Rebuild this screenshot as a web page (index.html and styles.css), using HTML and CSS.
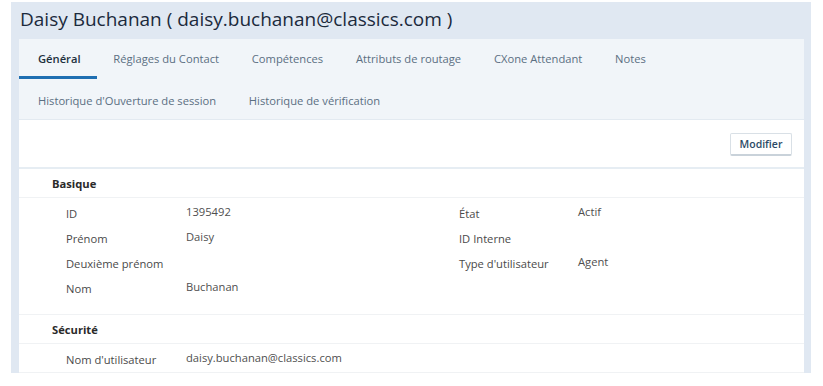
FILE: index.html
```html
<!DOCTYPE html>
<html lang="fr">
<head>
<meta charset="utf-8">
<link rel="stylesheet" href="styles.css">
</head>
<body>
<div class="frame">
  <h1 class="title">Daisy Buchanan ( daisy.buchanan@classics.com )</h1>
  <div class="panel">
    <nav class="tabs">
      <div class="tab-row">
        <span class="tab active">Général</span>
        <span class="tab">Réglages du Contact</span>
        <span class="tab">Compétences</span>
        <span class="tab">Attributs de routage</span>
        <span class="tab">CXone Attendant</span>
        <span class="tab">Notes</span>
      </div>
      <div class="tab-row">
        <span class="tab">Historique d'Ouverture de session</span>
        <span class="tab">Historique de vérification</span>
      </div>
    </nav>
    <div class="toolbar">
      <button class="btn">Modifier</button>
    </div>
    <section class="section">
      <div class="section-head">Basique</div>
      <div class="grid">
        <div class="label">ID</div><div class="value">1395492</div>
        <div class="label">État</div><div class="value">Actif</div>
        <div class="label">Prénom</div><div class="value">Daisy</div>
        <div class="label">ID Interne</div><div class="value"></div>
        <div class="label">Deuxième prénom</div><div class="value"></div>
        <div class="label">Type d'utilisateur</div><div class="value">Agent</div>
        <div class="label">Nom</div><div class="value">Buchanan</div>
        <div class="label"></div><div class="value"></div>
      </div>
    </section>
    <section class="section">
      <div class="section-head">Sécurité</div>
      <div class="grid">
        <div class="label">Nom d'utilisateur</div><div class="value">daisy.buchanan@classics.com</div>
        <div class="label"></div><div class="value"></div>
      </div>
    </section>
  </div>
</div>
</body>
</html>
```
FILE: styles.css
```css
* { box-sizing: border-box; }
html, body { margin: 0; padding: 0; background: #ffffff; }
body {
  font-family: "Open Sans", "Noto Sans", "Liberation Sans", sans-serif;
  color: #333;
  overflow: hidden;
}
.frame {
  margin: 2px 0 0 11px;
  width: 800px;
  height: 371px;
  background: #e0e8f2;
  padding: 0 7px 0 8px;
  overflow: hidden;
}
.title {
  margin: 0;
  padding: 4px 0 6px 1px;
  font-size: 19px;
  line-height: 27px;
  font-weight: 400;
  color: #1b2a3c;
}
.panel {
  background: #ffffff;
  height: 334px;
}
.tabs {
  background: #f1f5f9;
  border-bottom: 1px solid #e3eaf1;
}
.tab-row {
  display: flex;
  height: 40px;
}
.tab {
  display: flex;
  align-items: center;
  padding: 2px 16.4px 0;
  font-size: 11.2px;
  color: #5b6f82;
  white-space: nowrap;
  border-bottom: 3px solid transparent;
}
.tab:first-child { padding-left: 19px; }
.tab.active {
  color: #22303e;
  font-weight: 600;
  border-bottom-color: #1f6fb2;
}
.tab-row + .tab-row .tab { padding-top: 3px; border-bottom-width: 0; }
.toolbar {
  display: flex;
  justify-content: flex-end;
  align-items: flex-start;
  height: 49px;
  padding: 13px 12px 0 0;
  border-bottom: 2px solid #e6edf3;
}
.btn {
  width: 62px;
  height: 23px;
  background: #fff;
  border: 1px solid #d9e0e6;
  border-bottom: 2px solid #c9d2da;
  border-radius: 2px;
  font-family: inherit;
  font-size: 10.5px;
  font-weight: 600;
  color: #2b4a66;
  padding: 0;
  line-height: 19px;
}
.section-head {
  height: 29px;
  padding-left: 33px;
  display: flex;
  align-items: center;
  font-size: 11.2px;
  font-weight: 700;
  color: #2a2a2a;
  border-bottom: 1px solid #f0f2f4;
}
.grid {
  display: grid;
  grid-template-columns: 120px 273px 119px 1fr;
  grid-auto-rows: 25px;
  padding: 3px 0 0 47px;
  border-bottom: 1px solid #f0f2f4;
}
.grid .label, .grid .value {
  display: flex;
  align-items: center;
  font-size: 11.2px;
  white-space: nowrap;
}
.label { color: #4a4a4a; }
.value { color: #4f4f4f; padding-bottom: 4px; }
.section:first-of-type .grid { height: 117px; grid-template-rows: repeat(4, 25px) 0; }
```
